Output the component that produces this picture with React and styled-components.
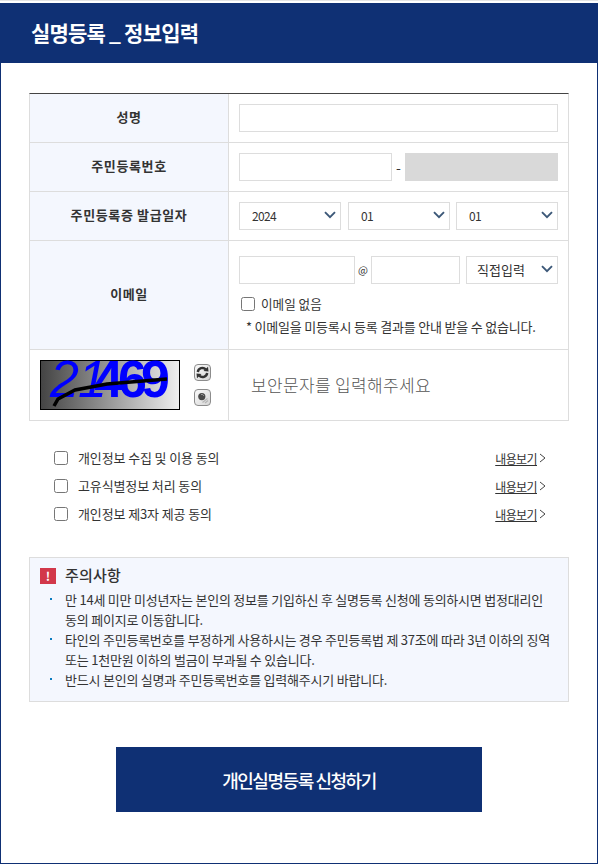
import React from 'react';
import styled, { createGlobalStyle } from 'styled-components';

const NAVY = '#0f3074';
const LINE = '#dddddd';
const FIELD = '#d9d9d9';
const FONT = '"Noto Sans CJK KR", "Noto Sans", sans-serif';

const Global = createGlobalStyle`
  html, body { margin: 0; padding: 0; background: #fff; }
  body { font-family: ${FONT}; color: #333; width: 601px; height: 865px; overflow: hidden; }
  * { box-sizing: border-box; }
`;

const Page = styled.div`
  width: 598px;
  height: 865px;
  padding-top: 2px;
  border-top: 1px solid #e4e4e4;
`;
const Frame = styled.div`
  height: 861px;
  border: 1px solid ${NAVY};
  border-top: 0;
`;
const Header = styled.h1`
  margin: 0;
  height: 60px;
  background: ${NAVY};
  color: #fff;
  padding-left: 30px;
  font-size: 21px;
  font-weight: 700;
  line-height: 58px;
  letter-spacing: -0.8px;
  white-space: pre;
`;
const Content = styled.div`
  padding: 30px 28px 0 28px;
`;
const Table = styled.div`
  width: 540px;
  border-top: 1px solid #444;
  border-left: 1px solid ${LINE};
  border-right: 1px solid ${LINE};
`;
const Row = styled.div`
  display: grid;
  grid-template-columns: 199px 1fr;
  height: ${p => p.$h}px;
  border-bottom: 1px solid ${LINE};
`;
const Th = styled.div`
  background: #f4f7fe;
  border-right: 1px solid ${LINE};
  display: flex;
  align-items: center;
  justify-content: center;
  padding-bottom: 3px;
  font-size: 13px;
  font-weight: 700;
  color: #333;
  letter-spacing: 0.62px;
`;
const Td = styled.div`
  padding: ${p => p.$pt || 10}px 10px 0 10px;
  display: flex;
  flex-direction: column;
`;
const Line = styled.div`
  display: flex;
  align-items: center;
  height: 28px;
`;
const Input = styled.div`
  height: 28px;
  width: ${p => (p.$w ? `${p.$w}px` : '100%')};
  flex: none;
  background: ${p => (p.$off ? FIELD : '#fff')};
  border: 1px solid ${p => (p.$off ? FIELD : LINE)};
`;
const Dash = styled.span`
  width: 13px;
  text-align: center;
  font-size: 14px;
  line-height: 24px;
  color: #333;
`;
const At = styled.span`
  width: 16px;
  text-align: center;
  font-size: 10.5px;
  line-height: 24px;
  color: #333;
`;
const Select = styled.div`
  position: relative;
  flex: none;
  width: ${p => p.$w}px;
  margin-left: ${p => p.$ml || 0}px;
  height: 28px;
  border: 1px solid ${LINE};
  background: #fff;
  padding-left: ${p => p.$pl || 12}px;
  font-size: ${p => p.$fs || 12}px;
  letter-spacing: ${p => p.$ls ?? -0.7}px;
  line-height: 26px;
  color: #333;
  svg { position: absolute; right: 4px; top: 8px; }
`;
const Chevron = () => (
  <svg width="12" height="8" viewBox="0 0 12 8" fill="none">
    <path d="M1 1.2 L6 6.2 L11 1.2" stroke="#3c5878" strokeWidth="1.9" />
  </svg>
);
const CheckRow = styled.div`
  display: flex;
  align-items: center;
  margin-top: 12px;
  padding-left: 2px;
  height: 16px;
  font-size: 12.6px;
  color: #333;
`;
const Box = styled.span`
  width: 14px;
  height: 14px;
  flex: none;
  border: 1px solid #767676;
  border-radius: 2.5px;
  background: #fff;
  margin-right: ${p => p.$mr}px;
`;
const RaisedText = styled.span`
  margin-bottom: 2px;
`;
const Note = styled.div`
  margin-top: 7px;
  padding-left: 7px;
  font-size: 13px;
  line-height: 16px;
  color: #333;
  letter-spacing: -0.2px;
  white-space: nowrap;
`;
const CaptchaCell = styled.div`
  background: #fff;
  border-right: 1px solid ${LINE};
  display: flex;
  align-items: flex-start;
  padding: 10px 0 0 10px;
`;
const Captcha = styled.div`
  width: 140px;
  height: 50px;
  border: 1px solid #000;
  background: linear-gradient(90deg, #444 0%, #eee 100%);
  position: relative;
`;
const Digit = styled.span`
  position: absolute;
  left: ${p => p.$x}px;
  top: 0;
  font-family: "Liberation Sans", sans-serif;
  font-size: 52px;
  line-height: 37px;
  font-style: ${p => (p.$italic ? 'italic' : 'normal')};
  font-weight: ${p => (p.$thin ? 400 : 700)};
  color: #0000ff;
`;
const CaptchaStroke = styled.svg`
  position: absolute;
  left: 0;
  top: 0;
`;
const CaptchaTools = styled.div`
  display: flex;
  flex-direction: column;
  gap: 8px;
  margin: 4px 0 0 14px;
`;
const Tool = styled.div`
  width: 17px;
  height: 17px;
  border: 1px solid #8c8c8c;
  border-radius: 4px;
  background: linear-gradient(135deg, #fafafa, #d6d6d6);
  display: flex;
  align-items: center;
  justify-content: center;
`;
const CaptchaInput = styled.div`
  padding: 23px 0 0 22px;
  font-size: 17px;
  line-height: 24px;
  font-weight: 300;
  color: #555;
  letter-spacing: 0.35px;
`;
const Agree = styled.div`
  margin-top: 23px;
  display: flex;
  flex-direction: column;
  padding: 0 23px 0 25px;
`;
const AgreeRow = styled.div`
  height: 28px;
  display: flex;
  align-items: center;
  justify-content: space-between;
`;
const AgreeLabel = styled.div`
  display: flex;
  align-items: center;
  font-size: 13px;
  letter-spacing: -0.12px;
  color: #333;
`;
const More = styled.a`
  font-size: 12px;
  color: #333;
  letter-spacing: -0.6px;
  display: flex;
  align-items: center;
  span { text-decoration: underline; }
  svg { margin-left: 2px; }
`;
const Notice = styled.div`
  margin-top: 29px;
  width: 540px;
  height: 145px;
  background: #f4f7fe;
  border: 1px solid ${LINE};
  padding: 9px 10px 0 10px;
`;
const NoticeTitle = styled.div`
  display: flex;
  align-items: center;
  height: 18px;
  font-size: 15px;
  font-weight: 500;
  color: #333;
  letter-spacing: 0.2px;
`;
const NoticeHeading = styled.span`
  margin-bottom: 4px;
`;
const Alert = styled.span`
  width: 16px;
  height: 16px;
  background: #d2384a;
  color: #fff;
  font-size: 12px;
  font-weight: 700;
  line-height: 16px;
  text-align: center;
  margin-right: 9px;
`;
const List = styled.ul`
  margin: 5px 0 0 0;
  padding: 0;
  list-style: none;
`;
const Item = styled.li`
  position: relative;
  padding-left: 25px;
  font-size: 13px;
  line-height: 20px;
  color: #333;
  letter-spacing: -0.22px;
  white-space: pre-line;
  &::before {
    content: '';
    position: absolute;
    left: 10px;
    top: 8px;
    width: 2px;
    height: 2px;
    background: #0a7cc0;
  }
`;
const Submit = styled.div`
  width: 366px;
  height: 65px;
  margin: 45px 0 0 87px;
  background: ${NAVY};
  color: #fff;
  display: flex;
  align-items: center;
  justify-content: center;
  font-size: 18px;
  font-weight: 500;
  letter-spacing: -1.45px;
`;

const agreements = ['개인정보 수집 및 이용 동의', '고유식별정보 처리 동의', '개인정보 제3자 제공 동의'];
const notices = [
  '만 14세 미만 미성년자는 본인의 정보를 기입하신 후 실명등록 신청에 동의하시면 법정대리인\n동의 페이지로 이동합니다.',
  '타인의 주민등록번호를 부정하게 사용하시는 경우 주민등록법 제 37조에 따라 3년 이하의 징역\n또는 1천만원 이하의 벌금이 부과될 수 있습니다.',
  '반드시 본인의 실명과 주민등록번호를 입력해주시기 바랍니다.',
];

export default function App() {
  return (
    <>
      <Global />
      <Page>
        <Frame>
          <Header>실명등록 _ 정보입력</Header>
          <Content>
            <Table>
              <Row $h={49}>
                <Th>성명</Th>
                <Td><Input /></Td>
              </Row>
              <Row $h={49}>
                <Th>주민등록번호</Th>
                <Td>
                  <Line>
                    <Input $w={153} />
                    <Dash>-</Dash>
                    <Input $w={153} $off />
                  </Line>
                </Td>
              </Row>
              <Row $h={49}>
                <Th>주민등록증 발급일자</Th>
                <Td>
                  <Line>
                    <Select $w={102}>2024<Chevron /></Select>
                    <Select $w={102} $ml={7}>01<Chevron /></Select>
                    <Select $w={102} $ml={6}>01<Chevron /></Select>
                  </Line>
                </Td>
              </Row>
              <Row $h={109}>
                <Th>이메일</Th>
                <Td $pt={15}>
                  <Line>
                    <Input $w={116} />
                    <At>@</At>
                    <Input $w={89} />
                    <Select $w={92} $ml={6} $pl={10} $fs={13} $ls={0}>직접입력<Chevron /></Select>
                  </Line>
                  <CheckRow>
                    <Box $mr={6} /><RaisedText>이메일 없음</RaisedText>
                  </CheckRow>
                  <Note>* 이메일을 미등록시 등록 결과를 안내 받을 수 없습니다.</Note>
                </Td>
              </Row>
              <Row $h={71}>
                <CaptchaCell>
                  <Captcha>
                    <Digit $x={9} $italic $thin>2</Digit>
                    <Digit $x={37} $italic $thin>1</Digit>
                    <Digit $x={53}>4</Digit>
                    <Digit $x={77}>6</Digit>
                    <Digit $x={100}>9</Digit>
                    <CaptchaStroke width="138" height="48" viewBox="0 0 138 48">
                      <path d="M13 45 L17 38 L34 29 L66 23 L126 18" stroke="#000" strokeWidth="3.5" fill="none" />
                    </CaptchaStroke>
                  </Captcha>
                  <CaptchaTools>
                    <Tool>
                      <svg width="13" height="13" viewBox="0 0 13 13" fill="none">
                        <path d="M1.8 6 A4.7 4.7 0 0 1 9.8 3.4" stroke="#333" strokeWidth="2.4" />
                        <path d="M11.2 7 A4.7 4.7 0 0 1 3.2 9.6" stroke="#333" strokeWidth="2.4" />
                        <path d="M7.5 5 L12.5 5.5 L12 .8 Z M5.5 8 L.5 7.5 L1 12.2 Z" fill="#333" />
                      </svg>
                    </Tool>
                    <Tool>
                      <svg width="13" height="13" viewBox="0 0 13 13" fill="none">
                        <circle cx="5.8" cy="5.6" r="3.6" fill="#4a4a4a" />
                        <path d="M5 3.5 A2.5 2.5 0 0 1 8 5" stroke="#999" strokeWidth="1" />
                        <path d="M6.5 11.5 L11.5 7.5 M9 12 L12 9.5" stroke="#b5b5b5" strokeWidth="1.2" />
                      </svg>
                    </Tool>
                  </CaptchaTools>
                </CaptchaCell>
                <CaptchaInput>보안문자를 입력해주세요</CaptchaInput>
              </Row>
            </Table>
            <Agree>
              {agreements.map(a => (
                <AgreeRow key={a}>
                  <AgreeLabel><Box $mr={10} /><RaisedText>{a}</RaisedText></AgreeLabel>
                  <More>
                    <span>내용보기</span>
                    <svg width="7" height="10" viewBox="0 0 7 10" fill="none">
                      <path d="M1 1 L6 5 L1 9" stroke="#444" strokeWidth="1" />
                    </svg>
                  </More>
                </AgreeRow>
              ))}
            </Agree>
            <Notice>
              <NoticeTitle><Alert>!</Alert><NoticeHeading>주의사항</NoticeHeading></NoticeTitle>
              <List>
                {notices.map(n => <Item key={n}>{n}</Item>)}
              </List>
            </Notice>
            <Submit>개인실명등록 신청하기</Submit>
          </Content>
        </Frame>
      </Page>
    </>
  );
}
